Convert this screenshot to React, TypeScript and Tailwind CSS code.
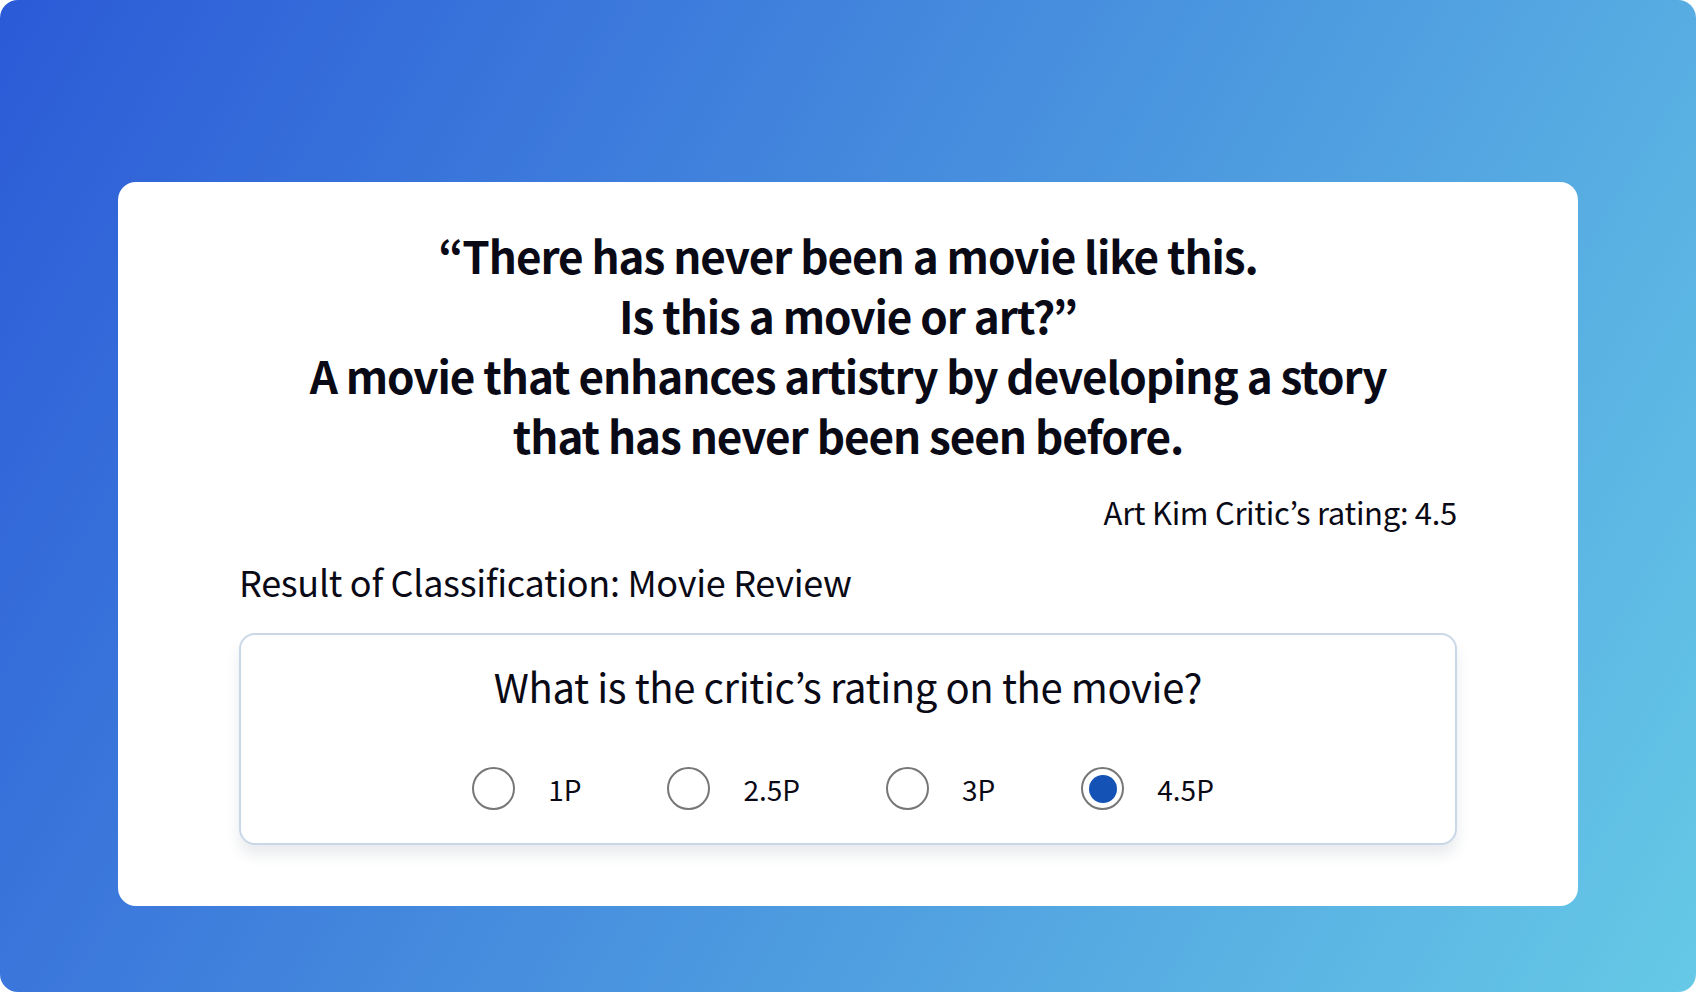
const options = ["1P", "2.5P", "3P", "4.5P"];

const Radio = ({ checked }: { checked: boolean }) => (
  <span className="flex h-[43px] w-[43px] shrink-0 items-center justify-center rounded-full border-2 border-[#777777] bg-white">
    {checked && <span className="h-[28px] w-[28px] rounded-full bg-[#1453b5]" />}
  </span>
);

export default function App() {
  return (
    <div className="h-[992px] w-[1696px] bg-white">
      <div
        className="flex h-full w-full flex-col rounded-[18px] bg-[linear-gradient(120deg,#2b5ad7,#66c9e6)] px-[118px] pt-[182px] text-[#0a0a16]"
        style={{ fontFamily: '"Noto Sans CJK KR", "Noto Sans", sans-serif' }}
      >
        <div className="flex flex-col rounded-[18px] bg-white px-[121px] pt-[43px] pb-[61px]">
          <h1 className="text-center text-[44px] font-bold leading-[60px] tracking-[-1.05px]">
            “There has never been a movie like this.
            <br />
            Is this a movie or art?”
            <br />
            A movie that enhances artistry by developing a story
            <br />
            that has never been seen before.
          </h1>
          <p className="mt-[27px] text-right text-[31px] leading-[40px] tracking-[-0.3px]">
            Art Kim Critic’s rating: 4.5
          </p>
          <p className="mt-[29px] text-[36px] leading-[40px] tracking-[-0.3px]">
            Result of Classification: Movie Review
          </p>
          <div className="mt-[32px] flex flex-col items-center rounded-[16px] border-2 border-[#c9d7e6] bg-white pt-[27px] pb-[33px] shadow-[0_10px_14px_rgba(40,60,90,0.10)]">
            <p className="text-[40px] leading-[48px] tracking-[-0.4px]">
              What is the critic’s rating on the movie?
            </p>
            <div className="mt-[57px] mr-[10px] flex items-center gap-[86px]">
              {options.map((o, i) => (
                <label key={o} className="flex items-center gap-[33px]">
                  <Radio checked={i === options.length - 1} />
                  <span className="text-[28px] leading-[40px]">{o}</span>
                </label>
              ))}
            </div>
          </div>
        </div>
      </div>
    </div>
  );
}
